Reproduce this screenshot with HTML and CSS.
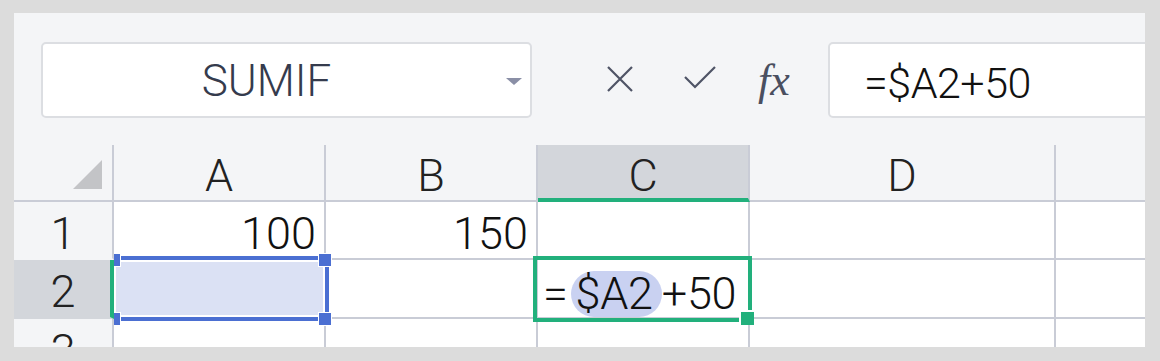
FILE: index.html
```html
<!DOCTYPE html>
<html lang="ja">
<head>
    <meta charset="UTF-8">
    <meta name="viewport" content="width=device-width, initial-scale=1.0">
    <title>SUMIF</title>
    <link rel="stylesheet" href="styles.css">
</head>
<body>
    <div class="panel">
        <div class="toolbar">
            <div class="name-box">
                <span class="name-text">SUMIF</span>
                <span class="name-arrow"></span>
            </div>
            <svg class="icon-cancel" width="28" height="28" viewBox="0 0 28 28">
                <path d="M2 2 L26 26 M26 2 L2 26" stroke="#4f5466" stroke-width="2.2" fill="none"/>
            </svg>
            <svg class="icon-enter" width="32" height="23" viewBox="0 0 32 23">
                <path d="M1 11 L11 21 L31 1" stroke="#4f5466" stroke-width="2.2" fill="none"/>
            </svg>
            <span class="icon-fx">fx</span>
            <div class="formula-box">=$A2+50</div>
        </div>

        <div class="sheet">
            <div class="cell corner"><span class="corner-mark"></span></div>
            <div class="cell col-head">A</div>
            <div class="cell col-head">B</div>
            <div class="cell col-head active-col">C</div>
            <div class="cell col-head">D</div>
            <div class="cell col-head last">&nbsp;</div>

            <div class="cell row-head">1</div>
            <div class="cell num">100</div>
            <div class="cell num">150</div>
            <div class="cell"></div>
            <div class="cell"></div>
            <div class="cell last"></div>

            <div class="cell row-head active-row">2</div>
            <div class="cell ref-cell"></div>
            <div class="cell"></div>
            <div class="cell edit-cell">=<span class="ref-pill">$A2</span>+50</div>
            <div class="cell"></div>
            <div class="cell last"></div>

            <div class="cell row-head">3</div>
            <div class="cell"></div>
            <div class="cell"></div>
            <div class="cell"></div>
            <div class="cell"></div>
            <div class="cell last"></div>

            <!-- range picked by the formula -->
            <div class="ref-frame"></div>
            <div class="handle tl"></div>
            <div class="handle tr"></div>
            <div class="handle bl"></div>
            <div class="handle br"></div>

            <!-- cell being edited -->
            <div class="active-frame"></div>
            <div class="fill-handle"></div>
        </div>
    </div>
</body>
</html>
```

FILE: styles.css
```css
body {
    margin: 0;
    background-color: #dcdcdc;
    font-family: Roboto, "Liberation Sans", Arial, sans-serif;
    font-weight: 300;
    color: #111;
}

.panel {
    margin: 13px 0 0 14px;
    width: 1131px;
    height: 334px;
    background-color: #f4f5f7;
    overflow: hidden;
}

/* formula bar */

.toolbar {
    display: flex;
    align-items: center;
    padding: 29px 0 0 27px;
    height: 76px;
}

.name-box {
    box-sizing: border-box;
    width: 491px;
    height: 76px;
    display: flex;
    align-items: center;
    padding-right: 40px;
    background-color: #fff;
    border: 2px solid #dcdee2;
    border-radius: 5px;
    position: relative;
}

.name-text {
    flex: 1;
    text-align: center;
    font-size: 44px;
    color: #353b4d;
    padding-top: 2px;
}

.name-arrow {
    position: absolute;
    right: 8px;
    top: 34px;
    width: 0;
    height: 0;
    border-left: 8px solid transparent;
    border-right: 8px solid transparent;
    border-top: 7px solid #8a8fa6;
}

.icon-cancel {
    margin-left: 74px;
    margin-top: -3px;
}

.icon-enter {
    margin-left: 50px;
    margin-top: -5px;
}

.icon-fx {
    margin-left: 42px;
    width: 37px;
    font-family: "Liberation Serif", "Times New Roman", serif;
    font-weight: normal;
    font-style: italic;
    font-size: 44px;
    color: #4a4f60;
}

.formula-box {
    box-sizing: border-box;
    flex: 1;
    margin-left: 33px;
    margin-right: -20px;
    height: 76px;
    padding: 6px 0 0 34px;
    display: flex;
    align-items: center;
    background-color: #fff;
    border: 2px solid #dcdee2;
    border-radius: 5px;
    font-size: 43px;
    letter-spacing: -0.5px;
}

/* sheet */

.sheet {
    margin-top: 27px;
    display: grid;
    grid-template-columns: 100px 212px 212px 212px 306px 1fr;
    grid-template-rows: 57px 58px 59px 58px;
    position: relative;
}

.cell {
    box-sizing: border-box;
    display: flex;
    align-items: center;
    padding-top: 7px;
    font-size: 45px;
    line-height: 44px;
    background-color: #fff;
    border-right: 2px solid #c9ccd6;
    border-bottom: 2px solid #c9ccd6;
}

.cell.last {
    border-right: none;
}

.corner {
    background-color: #f4f5f7;
    align-items: flex-end;
    justify-content: flex-end;
    padding: 0 10px 11px 0;
}

.corner-mark {
    width: 29px;
    height: 29px;
    background-color: #c3c4c7;
    clip-path: polygon(100% 0, 100% 100%, 0 100%);
}

.col-head {
    justify-content: center;
    background-color: #f4f5f7;
    color: #222;
}

.active-col {
    background-color: #d3d6db;
    border-bottom: 4px solid #22b07c;
    padding-top: 9px;
}

.row-head {
    justify-content: center;
    background-color: #f4f5f7;
    border-bottom-color: transparent;
    color: #222;
}

.active-row {
    background-color: #d3d6db;
    border-right: 4px solid #22b07c;
    padding-left: 2px;
}

.num {
    justify-content: flex-end;
    padding-right: 8px;
}

.ref-cell {
    background-color: #dbe1f4;
}

.edit-cell {
    display: block;
    padding: 11px 0 0 5px;
    font-size: 45px;
    line-height: 44px;
    letter-spacing: -0.3px;
}

.ref-pill {
    display: inline-block;
    margin-left: 3px;
    padding: 0 9px 0 5px;
    height: 46px;
    line-height: 46px;
    border-radius: 23px;
    background-color: #c9d1f1;
}

.ref-frame {
    position: absolute;
    left: 100px;
    top: 111px;
    width: 215px;
    height: 65px;
    box-sizing: border-box;
    border: 4px solid #4b6fd2;
    border-left: none;
    box-shadow: inset 0 0 0 2px #fff;
}

.handle {
    position: absolute;
    box-sizing: border-box;
    width: 14px;
    height: 14px;
    background-color: #4b6fd2;
    border: 1px solid #fff;
}

.handle.tl,
.handle.bl {
    left: 100px;
    width: 7px;
    border-left: none;
}

.handle.tr,
.handle.br {
    left: 304px;
}

.handle.tl,
.handle.tr {
    top: 108px;
}

.handle.bl,
.handle.br {
    top: 167px;
}

.active-frame {
    position: absolute;
    left: 519px;
    top: 111px;
    width: 219px;
    height: 66px;
    box-sizing: border-box;
    border: 4px solid #22b07c;
}

.fill-handle {
    position: absolute;
    left: 727px;
    top: 167px;
    width: 13px;
    height: 13px;
    background-color: #22b07c;
    box-shadow: -2px -2px 0 0 #fff;
}
```
